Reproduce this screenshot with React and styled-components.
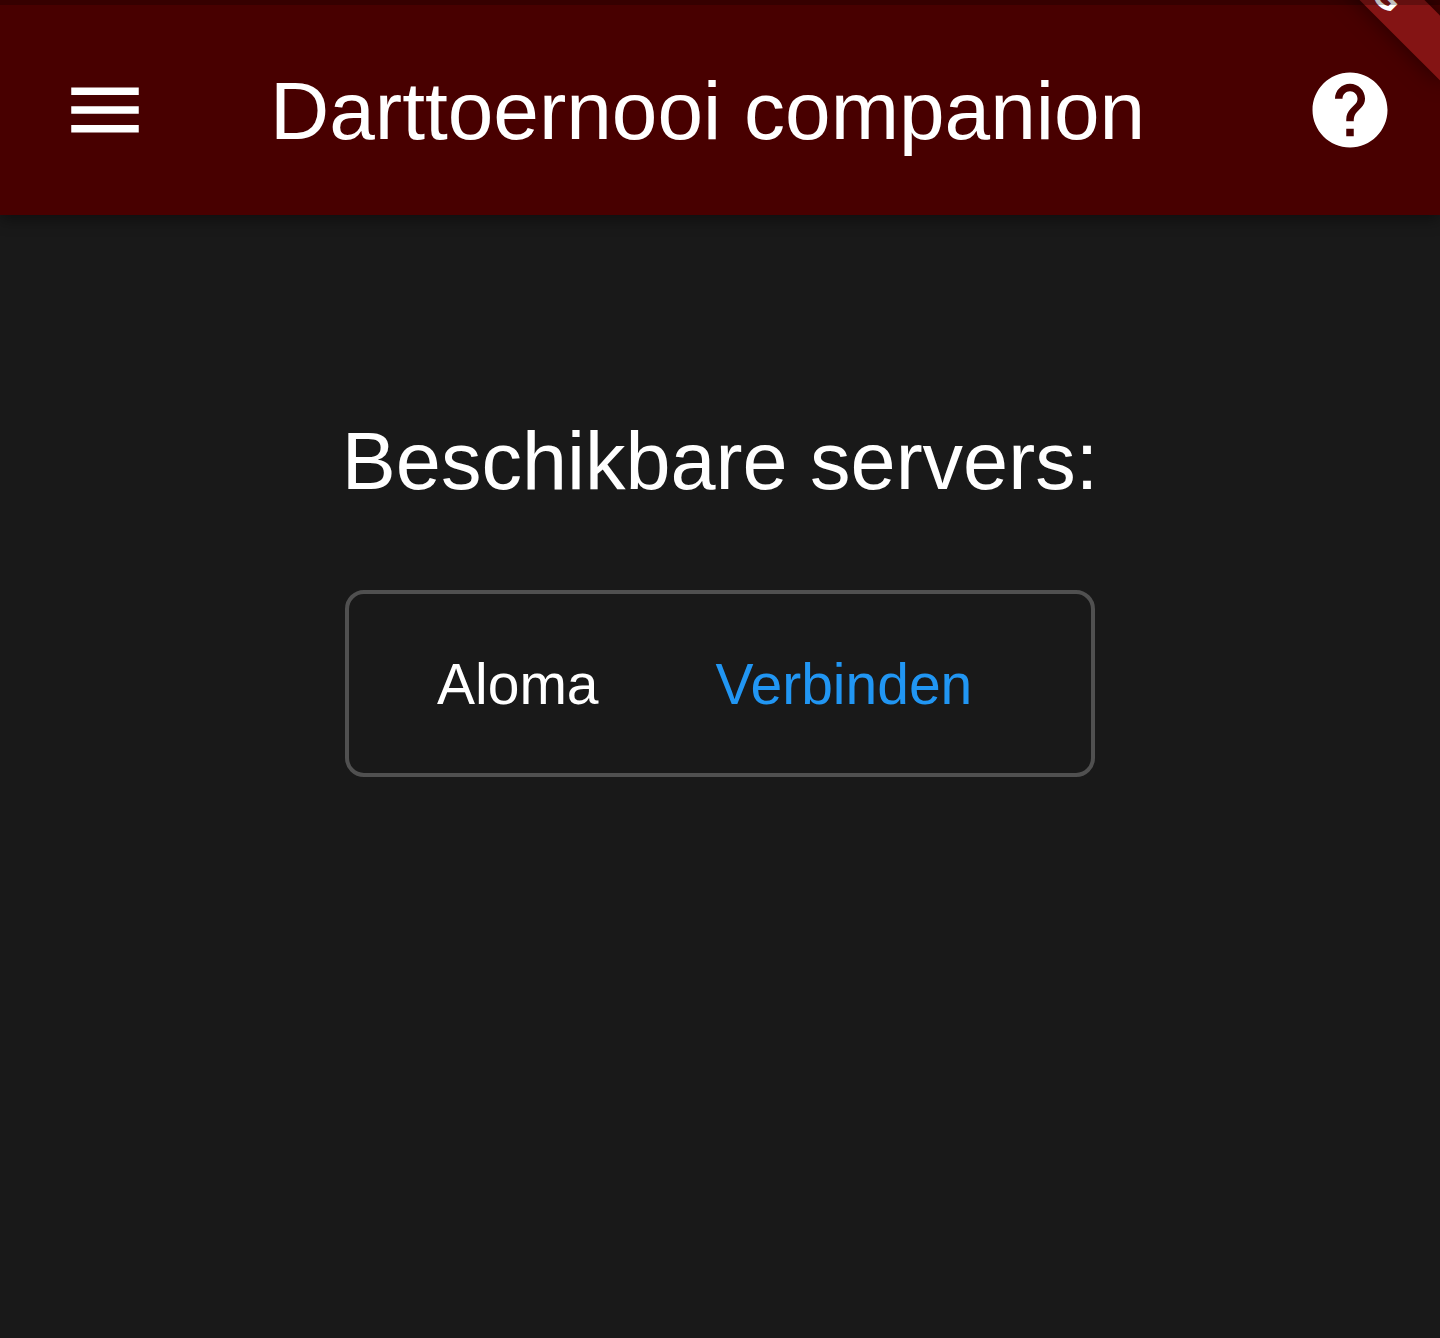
import React from "react";
import styled, { createGlobalStyle } from "styled-components";

const GlobalStyle = createGlobalStyle`
  * { box-sizing: border-box; }
  body {
    margin: 0;
    background: #191919;
    color: #ffffff;
    font-family: "Liberation Sans", Arial, sans-serif;
    font-weight: 300;
  }
`;

const Screen = styled.div`
  position: relative;
  min-height: 100vh;
  overflow: hidden;
`;

const AppBar = styled.header`
  display: flex;
  align-items: center;
  padding: 5px 45px 0 60px;
  height: 215px;
  background: #480000;
  box-shadow: 0 4px 15px rgba(0, 0, 0, 0.45);
`;

const IconButton = styled.button`
  flex: none;
  width: 90px;
  height: 90px;
  padding: 0;
  border: 0;
  background: none;
  color: inherit;
  cursor: pointer;

  svg {
    display: block;
    width: 100%;
    height: 100%;
    fill: currentColor;
  }
`;

const Title = styled.h1`
  flex: 1;
  margin: 0;
  padding: 2px 56px 0 120px;
  font-size: 82px;
  font-weight: 300;
  line-height: 100px;
  white-space: nowrap;
`;

const StatusScrim = styled.div`
  position: absolute;
  top: 0;
  left: 0;
  right: 0;
  height: 5px;
  background: rgba(0, 0, 0, 0.25);
`;

const Ribbon = styled.div`
  position: absolute;
  top: -65px;
  right: -60px;
  width: 300px;
  height: 46px;
  transform: rotate(45deg);
  background: #841414;
  box-shadow: 0 0 22px rgba(0, 0, 0, 0.5);
  font-size: 38px;
  font-weight: 700;
  line-height: 46px;
  text-align: center;
`;

const Main = styled.main`
  display: flex;
  flex-direction: column;
  align-items: center;
  gap: 79px;
  padding-top: 196px;
`;

const Heading = styled.h2`
  margin: 0;
  font-size: 81px;
  font-weight: 300;
  line-height: 100px;
  white-space: nowrap;
`;

const ServerList = styled.ul`
  width: 750px;
  max-width: 100%;
  margin: 0;
  padding: 0;
  list-style: none;
`;

const ServerCard = styled.li`
  display: flex;
  align-items: center;
  gap: 117px;
  padding: 55px 88px 53px;
  border: 4px solid #505050;
  border-radius: 19px;
  font-size: 57px;
  line-height: 71px;
`;

const ConnectButton = styled.button`
  padding: 0;
  border: 0;
  background: none;
  color: #2196f3;
  font: inherit;
  cursor: pointer;
`;

const servers = ["Aloma"];

export default function App() {
  return (
    <Screen>
      <GlobalStyle />
      <AppBar>
        <IconButton aria-label="Menu">
          <svg viewBox="0 0 24 24" aria-hidden="true">
            <path d="M3 18h18v-2H3v2zm0-5h18v-2H3v2zm0-7v2h18V6H3z" />
          </svg>
        </IconButton>
        <Title>Darttoernooi companion</Title>
        <IconButton aria-label="Help">
          <svg viewBox="0 0 24 24" aria-hidden="true">
            <path d="M12 2C6.48 2 2 6.48 2 12s4.48 10 10 10 10-4.48 10-10S17.52 2 12 2zm1 17h-2v-2h2v2zm2.07-7.75l-.9.92C13.45 12.9 13 13.5 13 15h-2v-.5c0-1.1.45-2.1 1.17-2.83l1.24-1.26c.37-.36.59-.86.59-1.41 0-1.1-.9-2-2-2s-2 .9-2 2H8c0-2.21 1.79-4 4-4s4 1.79 4 4c0 .88-.36 1.68-.93 2.25z" />
          </svg>
        </IconButton>
      </AppBar>
      <Main>
        <Heading>Beschikbare servers:</Heading>
        <ServerList>
          {servers.map((name) => (
            <ServerCard key={name}>
              <span>{name}</span>
              <ConnectButton>Verbinden</ConnectButton>
            </ServerCard>
          ))}
        </ServerList>
      </Main>
      <Ribbon>DEBUG</Ribbon>
      <StatusScrim />
    </Screen>
  );
}
